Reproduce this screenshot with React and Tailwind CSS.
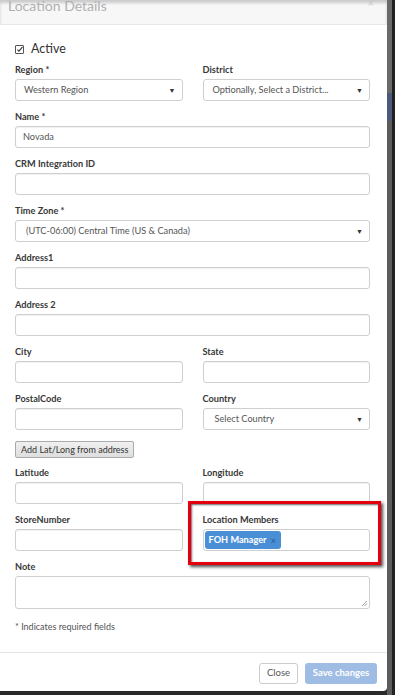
import React from "react";

const font = { fontFamily: "Lato, 'Open Sans', Arial, sans-serif" };

function Label({ children }) {
  return (
    <div className="h-[14px] leading-[14px] mb-[2px] text-[9.2px] font-bold text-[#383838]">
      {children}
    </div>
  );
}

function Input({ value, pl = "pl-[7px]" }) {
  return (
    <div
      className={`h-[22px] w-full rounded-[3px] border border-[#cfcfcf] bg-white shadow-[inset_0_1px_1px_rgba(0,0,0,0.06)] flex items-center ${pl} text-[9.2px] text-[#555]`}
    >
      {value}
    </div>
  );
}

function Select({ value, pl = "pl-[7px]" }) {
  return (
    <div
      className={`h-[22px] w-full rounded-[3px] border border-[#cfcfcf] bg-white flex items-center justify-between ${pl} pr-[6px] text-[9.2px] text-[#555]`}
    >
      <span>{value}</span>
      <span className="text-[7px] text-[#333]">▼</span>
    </div>
  );
}

function Field({ label, children, mb = "mb-[9px]" }) {
  return (
    <div className={mb}>
      <Label>{label}</Label>
      {children}
    </div>
  );
}

export default function App() {
  return (
    <div className="w-[395px] h-[695px] bg-[#2a2a2a] flex overflow-hidden" style={font}>
      <div className="w-[387px] h-[691px] bg-white rounded-br-[4px] flex flex-col">
        {/* header */}
        <div className="h-[25px] shrink-0 bg-[#f7f7f7] border-b border-[#e8e8e8] shadow-[inset_0_3px_3px_rgba(0,0,0,0.18)] flex items-start justify-between pl-[8px] pr-[13px] overflow-hidden">
          <div className="text-[14px] leading-[16px] -mt-[2px] text-[#b0b0b0]">Location Details</div>
          <div className="text-[11px] leading-[12px] -mt-[3px] text-[#c8c8c8]">×</div>
        </div>

        {/* body */}
        <div className="pl-[15px] pr-[17px] flex flex-col">
          <div className="flex items-center h-[16px] mt-[16px] mb-[6px]">
            <div className="w-[9px] h-[9px] border border-[#555] rounded-[1px] flex items-center justify-center">
              <svg width="9" height="9" viewBox="0 0 9 9">
                <path d="M1.8 4.6 L3.8 6.6 L8.4 1.2" stroke="#333" strokeWidth="1.3" fill="none" />
              </svg>
            </div>
            <span className="ml-[7px] text-[12.5px] text-[#333]">Active</span>
          </div>

          <div className="grid grid-cols-2 gap-x-[20px]">
            <Field label="Region *">
              <Select value="Western Region" pl="pl-[8px]" />
            </Field>
            <Field label="District">
              <Select value="Optionally, Select a District..." pl="pl-[9px]" />
            </Field>
          </div>

          <Field label="Name *">
            <Input value="Novada" />
          </Field>
          <Field label="CRM Integration ID">
            <Input />
          </Field>
          <Field label="Time Zone *">
            <Select value="(UTC-06:00) Central Time (US & Canada)" pl="pl-[10px]" />
          </Field>
          <Field label="Address1">
            <Input />
          </Field>
          <Field label="Address 2">
            <Input />
          </Field>

          <div className="grid grid-cols-2 gap-x-[20px]">
            <Field label="City">
              <Input />
            </Field>
            <Field label="State">
              <Input />
            </Field>
            <Field label="PostalCode">
              <Input />
            </Field>
            <Field label="Country">
              <Select value="Select Country" pl="pl-[11px]" />
            </Field>
          </div>

          <div className="flex mt-[2px] mb-[8px]">
            <div className="h-[17px] px-[5px] border border-[#aaa] rounded-[2px] bg-gradient-to-b from-[#f0f0f0] to-[#dedede] text-[9px] leading-[15px] text-[#333]">
              Add Lat/Long from address
            </div>
          </div>

          <div className="grid grid-cols-2 gap-x-[20px]">
            <Field label="Latitude">
              <Input />
            </Field>
            <Field label="Longitude">
              <Input />
            </Field>
            <Field label="StoreNumber">
              <Input />
            </Field>
            <div className="mb-[9px] relative">
              <Label>Location Members</Label>
              <div className="h-[22px] w-full rounded-[3px] border border-[#cfcfcf] bg-white flex items-center pl-[1px]">
                <div className="h-[18px] rounded-[3px] bg-[#4a8fd6] flex items-center pl-[4px] pr-[5px] text-[9.2px] font-bold text-white">
                  FOH Manager
                  <span className="ml-[4px] text-[10px] font-normal text-[#2c5a8a]">×</span>
                </div>
              </div>
              <div className="absolute -left-[15px] -top-[12px] w-[193px] h-[64px] border-[3px] border-[#e5000f] shadow-[2px_2px_3px_rgba(0,0,0,0.7),inset_1px_1px_2px_rgba(0,0,0,0.6)] pointer-events-none" />
            </div>
          </div>

          <div>
            <Label>Note</Label>
            <div className="relative h-[33px] w-full rounded-[3px] border border-[#cfcfcf] bg-white">
              <svg className="absolute right-[1px] bottom-[1px]" width="7" height="7" viewBox="0 0 7 7">
                <path d="M6 1 L1 6 M6 3.5 L3.5 6" stroke="#888" strokeWidth="0.8" />
              </svg>
            </div>
          </div>

          <div className="mt-[11px] h-[14px] leading-[14px] text-[9px] text-[#555]">* Indicates required fields</div>
        </div>

        {/* footer */}
        <div className="mt-[18px] border-t border-[#e5e5e5] flex justify-end gap-[7px] pt-[10px] pr-[10px]">
          <div className="h-[21px] w-[39px] rounded-[3px] border border-[#ccc] bg-white text-[9.5px] text-[#555] flex items-center justify-center">Close</div>
          <div className="h-[21px] w-[72px] rounded-[3px] bg-[#9fbde4] text-[9.5px] font-bold text-white flex items-center justify-center">Save changes</div>
        </div>
      </div>
      <div className="w-[5px] h-full flex flex-col bg-[#666]">
        <div className="h-[93px] bg-[#6a6a6a]" />
        <div className="h-[28px] bg-[#4b5a78]" />
        <div className="flex-1 bg-[#5c5c5c]" />
      </div>
      <div className="w-[3px] h-full bg-[#222]" />
    </div>
  );
}
